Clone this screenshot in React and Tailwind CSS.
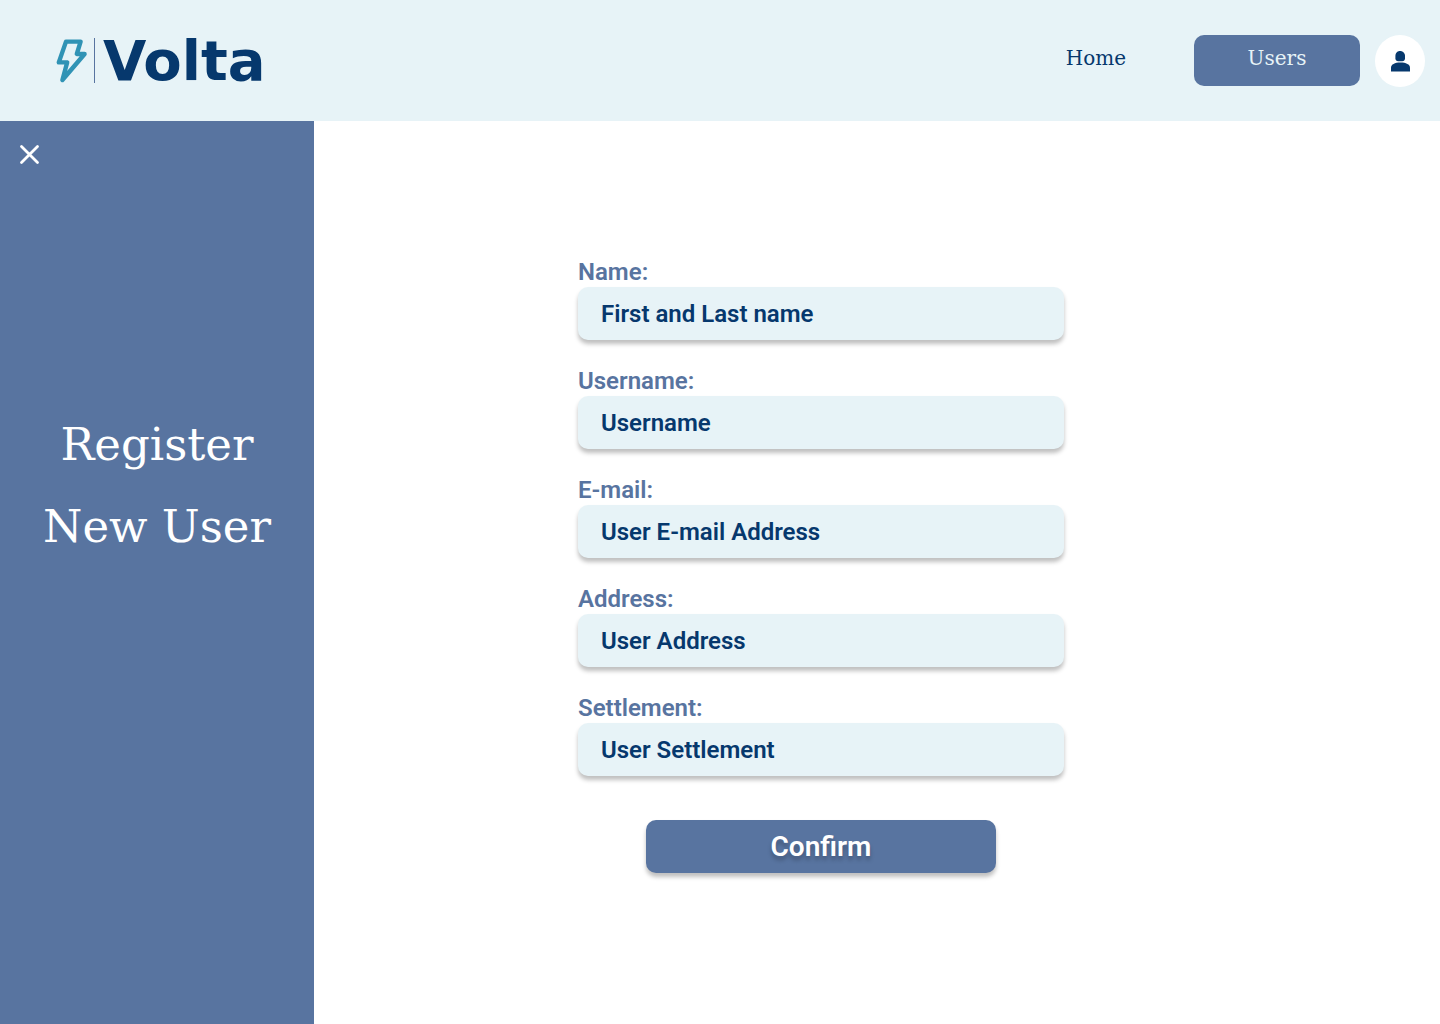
const fields = [
  { id: "name", label: "Name:", placeholder: "First and Last name", type: "text" },
  { id: "username", label: "Username:", placeholder: "Username", type: "text" },
  { id: "email", label: "E-mail:", placeholder: "User E-mail Address", type: "email" },
  { id: "address", label: "Address:", placeholder: "User Address", type: "text" },
  { id: "settlement", label: "Settlement:", placeholder: "User Settlement", type: "text" },
];

function Logo() {
  return (
    <a href="#" aria-label="Volta" className="flex items-center">
      <svg width="32" height="46" viewBox="0 0 32 46" fill="none" aria-hidden="true">
        <path
          d="M10 3.6H24.6L20.8 16H28.6L6.4 42L11.2 24.4H2.8Z"
          stroke="#3093B5"
          strokeWidth="4.4"
          strokeLinejoin="round"
        />
      </svg>
      <span className="ml-1.5 h-[45px] w-px bg-[#5874A0]" />
      <span className="ml-2 font-['DejaVu_Sans',sans-serif] text-[56px] leading-[46px] font-bold text-[#06386D]">
        Volta
      </span>
    </a>
  );
}

function Header() {
  return (
    <header className="flex h-[121px] items-center justify-between bg-[#E7F3F7] pr-[15px] pl-14">
      <Logo />
      <nav className="flex items-center font-['DejaVu_Serif',serif] text-xl">
        <a href="#" className="flex h-[51px] items-start pt-2 leading-[30px] text-[#06386D]">
          Home
        </a>
        <a
          href="#"
          aria-current="page"
          className="mr-[15px] ml-[68px] flex h-[51px] w-[166px] items-start justify-center rounded-[10px] bg-[#5874A0] pt-2 leading-[30px] text-[#E7F3F7]"
        >
          Users
        </a>
        <button
          type="button"
          aria-label="Account"
          className="flex h-[52px] w-[50px] items-center justify-center rounded-[50%] bg-white"
        >
          <svg width="20" height="22" viewBox="0 0 20 22" fill="#06386D" aria-hidden="true">
            <path d="M10 1C13 1 15 3.2 15 6.1V8.2C15 10.2 13.9 11.2 12.2 11.2H8.2C6.5 11.2 5.4 10.2 5.4 8.2V6.1C5.4 3.2 7.1 1 10 1Z" />
            <path d="M1 21.5V17.6C1 14.6 4.8 12.6 10.4 12.6S20 14.6 20 17.6V21.5Z" />
          </svg>
        </button>
      </nav>
    </header>
  );
}

function Sidebar() {
  return (
    <aside className="w-[314px] shrink-0 bg-[#5874A0] text-white">
      <button type="button" aria-label="Close" className="mt-[23px] ml-[19px] block">
        <svg width="21" height="21" viewBox="0 0 21 21" fill="none" aria-hidden="true">
          <path d="M2.5 2.5L18.5 18.5M18.5 2.5L2.5 18.5" stroke="currentColor" strokeWidth="2.8" strokeLinecap="round" />
        </svg>
      </button>
      <h1 className="mt-[239px] text-center font-['DejaVu_Serif',serif] text-[45px] leading-[82px]">
        Register
        <br />
        New User
      </h1>
    </aside>
  );
}

function RegisterForm() {
  return (
    <form
      className="flex w-full max-w-[486px] flex-col gap-[26px] font-['Roboto',sans-serif]"
      onSubmit={(event) => event.preventDefault()}
    >
      {fields.map((field) => (
        <div key={field.id} className="flex flex-col">
          <label htmlFor={field.id} className="text-2xl leading-[30px] font-semibold text-[#5874A0]">
            {field.label}
          </label>
          <input
            id={field.id}
            type={field.type}
            placeholder={field.placeholder}
            className="h-[53px] w-full rounded-[10px] bg-[#E7F3F7] px-[23px] text-2xl font-semibold text-[#06386D] shadow-[0_4px_4px_rgba(0,0,0,0.25)] placeholder:text-[#06386D]"
          />
        </div>
      ))}
      <button
        type="submit"
        className="mt-[18px] h-[53px] w-full max-w-[350px] self-center rounded-[10px] bg-[#5874A0] text-[28px] font-semibold text-white shadow-[0_4px_4px_rgba(0,0,0,0.25)] [text-shadow:0_4px_4px_rgba(0,0,0,0.25)]"
      >
        Confirm
      </button>
    </form>
  );
}

export default function App() {
  return (
    <div className="flex min-h-screen flex-col bg-white">
      <Header />
      <div className="flex flex-1">
        <Sidebar />
        <main className="flex flex-1 justify-center pt-[136px] pr-28 pb-10">
          <RegisterForm />
        </main>
      </div>
    </div>
  );
}
